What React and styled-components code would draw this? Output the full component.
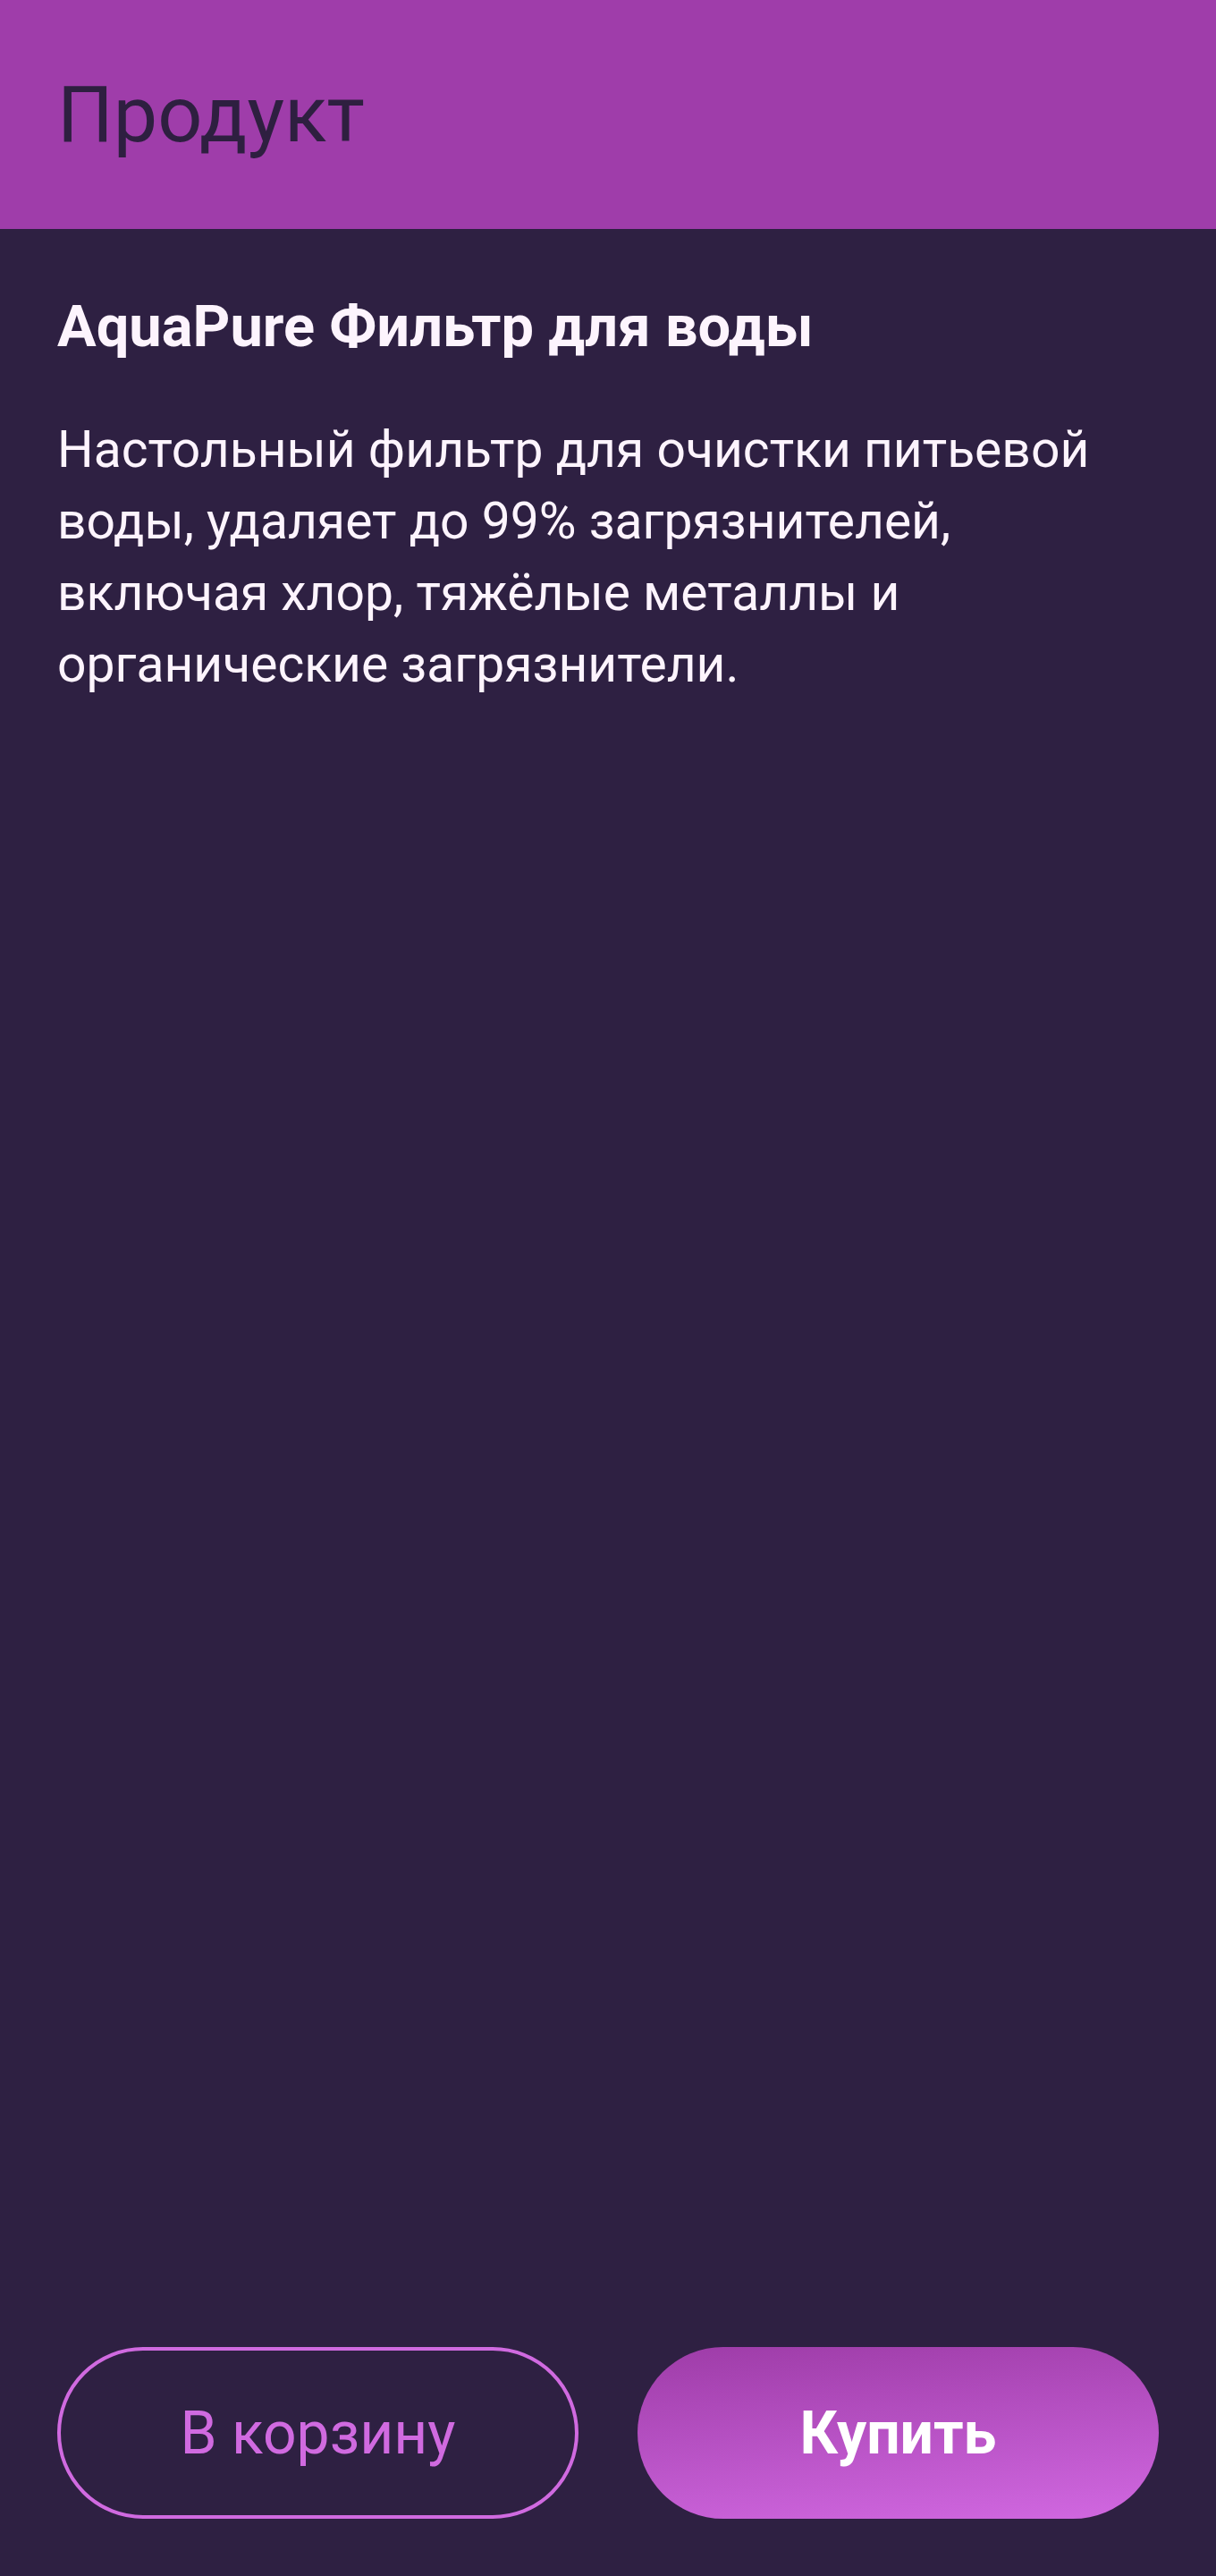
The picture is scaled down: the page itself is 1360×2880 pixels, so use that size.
import React from "react";
import styled, { createGlobalStyle } from "styled-components";

const Global = createGlobalStyle`
  html, body { margin: 0; padding: 0; background: #2e2042; }
  #root { min-height: 2880px; }
  * { box-sizing: border-box; }
`;

const Screen = styled.div`
  width: 1360px;
  height: 2880px;
  display: flex;
  flex-direction: column;
  background: #2e2042;
  font-family: Roboto, "Noto Sans", sans-serif;
`;

const TopBar = styled.header`
  height: 256px;
  flex: none;
  display: flex;
  align-items: center;
  padding: 0 64px;
  background: #9f3daa;
`;

const BarTitle = styled.h1`
  margin: 0;
  font-size: 88px;
  font-weight: 400;
  line-height: 1;
  color: #2e1f40;
`;

const Content = styled.main`
  flex: 1;
  display: flex;
  flex-direction: column;
  padding: 69px 64px 0;
`;

const ProductName = styled.h2`
  margin: 0;
  font-size: 65px;
  font-weight: 700;
  line-height: 80px;
  color: #fdf4fd;
`;

const Description = styled.p`
  margin: 58px 0 0;
  font-size: 57px;
  font-weight: 400;
  line-height: 80px;
  color: #fdf4fd;
`;

const Actions = styled.footer`
  flex: none;
  display: grid;
  grid-template-columns: 1fr 1fr;
  gap: 66px;
  padding: 0 64px 64px;
`;

const PillButton = styled.button`
  height: 192px;
  border-radius: 96px;
  font-family: Roboto, "Noto Sans", sans-serif;
  font-size: 66px;
  cursor: pointer;
  display: flex;
  align-items: center;
  justify-content: center;
  ${(p) =>
    p.$primary
      ? `
    border: none;
    background: linear-gradient(175deg, #9e3ca8 0%, #d168e1 100%);
    color: #ffffff;
    font-weight: 700;
  `
      : `
    border: 4px solid #d06ae0;
    background: transparent;
    color: #d06ae0;
    font-weight: 400;
  `}
`;

export default function App() {
  return (
    <>
      <Global />
      <Screen>
        <TopBar>
          <BarTitle>Продукт</BarTitle>
        </TopBar>
        <Content>
          <ProductName>AquaPure Фильтр для воды</ProductName>
          <Description>
            Настольный фильтр для очистки питьевой воды, удаляет до 99%
            загрязнителей, включая хлор, тяжёлые металлы и органические
            загрязнители.
          </Description>
        </Content>
        <Actions>
          <PillButton>В корзину</PillButton>
          <PillButton $primary>Купить</PillButton>
        </Actions>
      </Screen>
    </>
  );
}
